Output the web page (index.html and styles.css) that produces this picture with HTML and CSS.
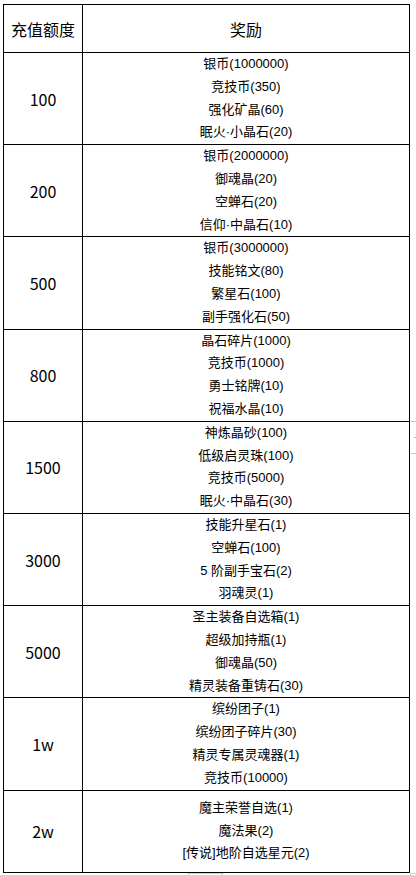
FILE: index.html
```html
<!DOCTYPE html>
<html lang="zh-CN">
<head>
<meta charset="utf-8">
<title>充值奖励</title>
<link rel="stylesheet" href="styles.css">
</head>
<body>
<table class="rewards">
  <thead>
    <tr class="head-row">
      <th class="amount">充值额度</th>
      <th class="items">奖励</th>
    </tr>
  </thead>
  <tbody>
    <tr>
      <td class="amount">100</td>
      <td class="items"><div>银币(1000000)</div><div>竞技币(350)</div><div>强化矿晶(60)</div><div>眠火·小晶石(20)</div></td>
    </tr>
    <tr>
      <td class="amount">200</td>
      <td class="items"><div>银币(2000000)</div><div>御魂晶(20)</div><div>空蝉石(20)</div><div>信仰·中晶石(10)</div></td>
    </tr>
    <tr>
      <td class="amount">500</td>
      <td class="items"><div>银币(3000000)</div><div>技能铭文(80)</div><div>繁星石(100)</div><div>副手强化石(50)</div></td>
    </tr>
    <tr>
      <td class="amount">800</td>
      <td class="items"><div>晶石碎片(1000)</div><div>竞技币(1000)</div><div>勇士铭牌(10)</div><div>祝福水晶(10)</div></td>
    </tr>
    <tr>
      <td class="amount">1500</td>
      <td class="items"><div>神炼晶砂(100)</div><div>低级启灵珠(100)</div><div>竞技币(5000)</div><div>眠火·中晶石(30)</div></td>
    </tr>
    <tr>
      <td class="amount">3000</td>
      <td class="items"><div>技能升星石(1)</div><div>空蝉石(100)</div><div>5 阶副手宝石(2)</div><div>羽魂灵(1)</div></td>
    </tr>
    <tr>
      <td class="amount">5000</td>
      <td class="items"><div>圣主装备自选箱(1)</div><div>超级加持瓶(1)</div><div>御魂晶(50)</div><div>精灵装备重铸石(30)</div></td>
    </tr>
    <tr>
      <td class="amount">1w</td>
      <td class="items"><div>缤纷团子(1)</div><div>缤纷团子碎片(30)</div><div>精灵专属灵魂器(1)</div><div>竞技币(10000)</div></td>
    </tr>
    <tr class="last-row">
      <td class="amount">2w</td>
      <td class="items"><div>魔主荣誉自选(1)</div><div>魔法果(2)</div><div>[传说]地阶自选星元(2)</div></td>
    </tr>
  </tbody>
</table>
<div class="side-mark"><span class="side-dash"></span></div>
<div class="bottom-mark"></div>
<div class="corner-mark"></div>
</body>
</html>
```

FILE: styles.css
```css
html, body {
  margin: 0;
  padding: 0;
  background: #ffffff;
}

body {
  position: relative;
  width: 416px;
  height: 875px;
  overflow: hidden;
  color: #000000;
  font-family: "Liberation Sans", "Noto Sans CJK SC", sans-serif;
}

.rewards {
  margin: 4px 0 0 3px;
  width: 407px;
  border-collapse: separate;
  border-spacing: 0;
  border-left: 1px solid #000;
  border-top: 1px solid #000;
  table-layout: fixed;
}

.rewards th,
.rewards td {
  border-right: 1px solid #000;
  border-bottom: 1px solid #000;
  padding: 0;
  text-align: center;
  vertical-align: middle;
  font-weight: normal;
}

.rewards .amount {
  width: 78px;
  font-family: "Noto Sans CJK SC", sans-serif;
  font-size: 16px;
  line-height: 20px;
}

.rewards .items {
  font-size: 13px;
  line-height: 22.8px;
}

.rewards .head-row th {
  height: 47px;
  font-family: "Noto Sans CJK SC", sans-serif;
  font-size: 16px;
  line-height: 20px;
}

.last-row td {
  height: 81px;
}

.side-mark {
  position: absolute;
  left: 411px;
  top: 421px;
  width: 6px;
  height: 31px;
  border-top: 1px solid #c8c8c8;
  border-bottom: 1px solid #c8c8c8;
}

.side-dash {
  position: absolute;
  left: 3px;
  top: 15px;
  width: 2px;
  height: 1px;
  background: #b0b0b0;
}

.bottom-mark {
  position: absolute;
  left: 188px;
  top: 873px;
  width: 33px;
  height: 3px;
  border-top: 1px solid #d0d0d0;
  border-left: 1px solid #c0c0c0;
  border-right: 1px solid #c0c0c0;
}

.corner-mark {
  position: absolute;
  left: 410px;
  top: 873px;
  width: 6px;
  height: 3px;
  border-top: 1px solid #d0d0d0;
  border-left: 1px solid #d0d0d0;
}
```
